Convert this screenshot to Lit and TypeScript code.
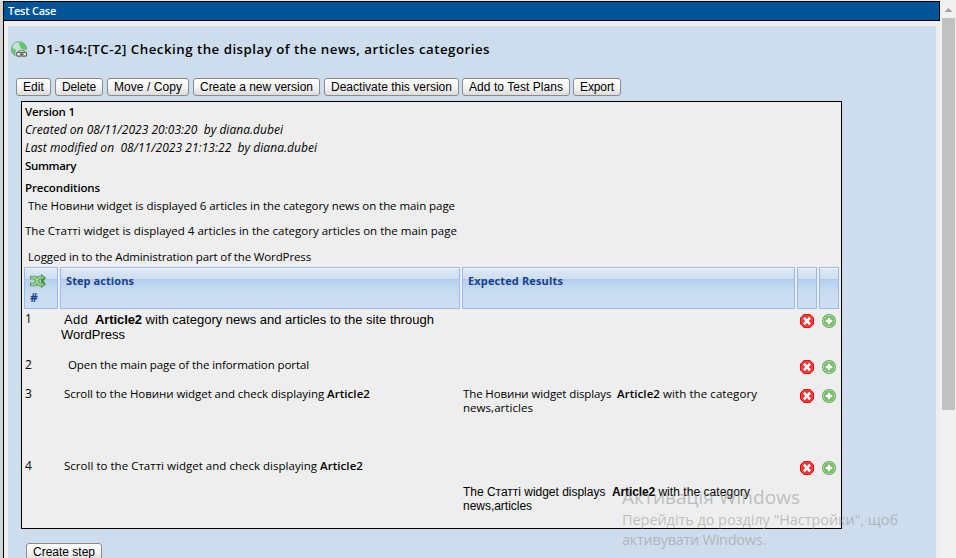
import { LitElement, html, css } from "lit";

/** A run of text whose tracking is adjusted so that it fills `width` pixels. */
class TextRun extends LitElement {
  static properties = { text: {}, width: { type: Number }, tracking: { state: true } };
  declare text: string;
  declare width: number;
  declare tracking: number;
  static styles = css`
    :host { display: inline-block; white-space: pre; }
  `;
  constructor() {
    super();
    this.text = "";
    this.width = 0;
    this.tracking = 0;
  }
  firstUpdated() {
    const span = this.renderRoot.querySelector("span")!;
    this.tracking = (this.width - span.getBoundingClientRect().width) / this.text.length;
  }
  render() {
    return html`<span style="letter-spacing:${this.tracking}px">${this.text}</span>`;
  }
}
customElements.define("text-run", TextRun);

const run = (text: string, width: number, cls = "") =>
  html`<text-run class=${cls} .text=${text} .width=${width}></text-run>`;

const deleteIcon = html`<svg class="icon" width="14" height="14" viewBox="0 0 14 14">
  <path d="M4 0H10L14 4V10L10 14H4L0 10V4Z" fill="#f00808" />
  <path d="M4.400 1.500H9.600L12.500 4.400V9.600L9.600 12.500H4.400L1.500 9.600V4.400Z" fill="#f83030" stroke="#fb5a5a" stroke-width=".7" />
  <path d="M3.900 3.700L10.100 10.300M10.100 3.700L3.900 10.300" stroke="#fff" stroke-width="2.700" />
</svg>`;

const addIcon = html`<svg class="icon" width="14" height="14" viewBox="0 0 14 14">
  <circle cx="7" cy="7" r="7" fill="#5fa755" />
  <circle cx="7" cy="7" r="5.700" fill="#74bb64" stroke="#b4dcaa" stroke-width=".9" />
  <path d="M7 3.700V10.300M3.700 7H10.300" stroke="#fff" stroke-width="2.300" />
</svg>`;

const linkIcon = html`<svg class="globe" width="17" height="17" viewBox="0 0 17 17">
  <defs>
    <radialGradient id="sea" cx=".35" cy=".3" r=".8">
      <stop offset="0" stop-color="#e3f4ef" />
      <stop offset=".6" stop-color="#92cbc0" />
      <stop offset="1" stop-color="#4f9c87" />
    </radialGradient>
  </defs>
  <circle cx="8" cy="8.200" r="7.600" fill="url(#sea)" stroke="#5aa287" stroke-width=".8" />
  <path d="M7.500 1.500C12 1 14.800 4 15.300 9H12L10 7L8.500 5ZM1 7L4 8L6 10L5 14L3 13L1 10Z" fill="#63c463" />
  <path d="M2 7Q3 2.500 8 1.500L8.500 5L6 8L3 8Z" fill="#bfe6cc" />
  <rect x="4.500" y="8.500" width="12" height="8" rx="2" fill="#cfd6d6" />
  <rect x="5.600" y="11.300" width="5" height="3.800" rx="1.400" fill="#fff" stroke="#59615f" stroke-width="1.200" />
  <rect x="10.600" y="11.300" width="5" height="3.800" rx="1.400" fill="#fff" stroke="#59615f" stroke-width="1.200" />
  <path d="M8.500 13.200H13" stroke="#59615f" stroke-width="1.200" />
  <path d="M7.500 11V9.500H13.500V11" fill="none" stroke="#8c9694" />
</svg>`;

const shuffleIcon = html`<svg class="shuffle" width="16" height="14" viewBox="0 0 16 14">
  <path d="M0 3.500H5L9 10.500H12M0 10.500H5L9 3.500H12" fill="none" stroke="#4c9a48" stroke-width="3.600" />
  <path d="M11 0L16 3.700L13.500 7L16 10.500L11 14Z" fill="#3f8d3c" />
  <path d="M1 3.500H5L9 10.500H12.500M1 10.500H5L9 3.500H12.500" fill="none" stroke="#9bd691" stroke-width="1.900" />
  <path d="M12 1.800L14.500 3.700L12 5.600ZM12 8.600L14.500 10.500L12 12.400Z" fill="#86c97d" />
</svg>`;

const buttons: [string, number][] = [
  ["Edit", 35], ["Delete", 48], ["Move / Copy", 82], ["Create a new version", 127],
  ["Deactivate this version", 135], ["Add to Test Plans", 108], ["Export", 48],
];

const steps = [
  {
    cls: "s1",
    action: html`<div class="arial big">${run("Add", 24, "in4")}${run("Article2", 47, "b gap7")}${run(" with category news and articles to the site through", 292)}</div>
      <div class="arial big">${run("WordPress", 64, "in0")}</div>`,
    result: "",
  },
  { cls: "s2", action: html`<div>${run("Open the main page of the information portal", 241, "in7")}</div>`, result: "" },
  {
    cls: "s3",
    action: html`<div>${run("Scroll to the Новини widget and check displaying ", 263, "in4")}${run("Article2", 43, "b")}</div>`,
    result: html`<div>${run("The Новини widget displays  ", 154)}${run("Article2", 43, "b")}${run(" with the category", 97)}</div>
      <div>${run("news,articles", 70)}</div>`,
  },
  {
    cls: "s4",
    action: html`<div>${run("Scroll to the Статті widget and check displaying ", 256, "in4")}${run("Article2", 43, "b")}</div>`,
    result: html`<div class="arial low">${run("The Статті widget displays  ", 149)}${run("Article2", 43, "b")}${run(" with the category", 95)}</div>
      <div class="arial">${run("news,articles", 69)}</div>`,
  },
];

class AppRoot extends LitElement {
  static styles = css`
    :host {
      display: block; height: 558px; overflow: hidden; position: relative;
      background: #eee; color: #000;
      font: 11.5px/14px "Open Sans", "Noto Sans", sans-serif;
    }
    .page { display: flex; height: 558px; box-sizing: border-box; border-top: 1px solid #e4f1f3; }
    .edge { width: 3px; background: #d4d4d0; border-right: 1px solid #000; flex: none; }
    .main { width: 936px; flex: none; overflow: hidden; }
    .bar {
      box-sizing: border-box; height: 20px; padding-left: 4px;
      border: 1px solid #000; border-left: 0; background: #005498;
      color: #fff; font-size: 11px; font-weight: 600; line-height: 18px;
    }
    .panel { margin: 5px 4px 0; height: 540px; background: #cddded; overflow: hidden; }
    .title { display: flex; align-items: center; height: 20px; margin: 13px 0 0 3px; gap: 8px; font-size: 13.3px; line-height: 20px; font-weight: 600; }
    .globe { margin-top: 1px; }
    .buttons { display: flex; gap: 4px; margin: 19px 0 0 8px; }
    .btn {
      box-sizing: border-box; height: 18px; padding: 0; border: 1px solid #8b8b8b; border-radius: 3px;
      background: linear-gradient(#fff, #f5f5f5 50%, #dcdcdc); color: #000;
      font: 12px/16px "Liberation Sans", Arial, sans-serif; text-align: center; flex: none;
    }
    .btn.tight { margin-left: -1px; }
    .card { box-sizing: border-box; width: 821px; height: 428px; margin: 5px 0 0 13px; padding: 1px 2px 0; border: 1px solid #000; background: #eee; }
    .line { height: 18px; line-height: 17px; padding-left: 1px; }
    .b { font-weight: 600; }
    .i { font-style: italic; font-size: 12px; line-height: 18px; }
    .pre { margin-top: 4px; }
    .second { margin-top: 7px; }
    .third { margin-top: 8px; margin-bottom: 1px; }
    .indent { padding-left: 4px; }
    .row { display: grid; grid-template-columns: 34px 400px 333px 20px 20px; column-gap: 2px; }
    .head { height: 42px; margin-bottom: 1px; }
    .th {
      box-sizing: border-box; border: 1px solid #99bbe8; padding: 4px 5px; height: 42px;
      box-shadow: inset 0 1px #f3f8fd;
      background: linear-gradient(#dce8f5 0, #cfdff1 11px, #abc7ec 11px, #b9d0ef 13px, #c9dbf2 24px, #cdddf3 100%);
      color: #15428b; font-weight: 700; font-size: 11px; line-height: 17px;
    }
    .shuffle { display: block; margin-top: 2px; }
    .hash { line-height: 17px; margin-top: 1px; font-size: 12px; }
    .num { padding: 2px 0 0 1px; font-size: 12px; }
    .act { padding-top: 2px; }
    .res { padding: 2px 0 0 1px; }
    .act, .res { white-space: nowrap; }
    .arial { font-family: "Liberation Sans", Arial, sans-serif; font-size: 12px; }
    .arial .b { font-weight: 700; }
    .arial.big { font-size: 13px; line-height: 15px; }
    .low { margin-top: 26px; }
    .in0 { margin-left: 1px; }
    .in4 { margin-left: 4px; }
    .in7 { margin-left: 8px; }
    .gap7 { margin-left: 7px; }
    .icon { display: block; margin: 4px 0 0 3px; }
    .s1 { height: 46px; }
    .s2 { height: 29px; }
    .s3 { height: 72px; }
    .s4 { height: 70px; }
    .after { margin: 14px 0 0 18px; }
    .scroll { flex: 1; background: #f1f1f1; display: flex; flex-direction: column; }
    .arrow { display: block; margin: 7px 0 6px 5px; }
    .thumb { width: 13px; height: 392px; margin-left: 2px; background: #c1c1c1; }
    .mark { position: absolute; left: 622px; top: 485px; color: rgba(140, 140, 140, .5); font-size: 14.5px; line-height: 20px; white-space: nowrap; }
    .mark .big-line { font-size: 19px; line-height: 25px; }
  `;

  button(label: string, width: number, cls = "") {
    return html`<button class="btn ${cls}" style="width:${width}px">${run(label, width - 14)}</button>`;
  }

  render() {
    return html`
      <div class="page">
        <div class="edge"></div>
        <div class="main">
          <div class="bar">${run("Test Case", 48)}</div>
          <div class="panel">
            <div class="title">${linkIcon}${run("D1-164:[TC-2] Checking the display of the news, articles categories", 454)}</div>
            <div class="buttons">${buttons.map(([l, w], i) => this.button(l, w, i > 4 ? "tight" : ""))}</div>
            <div class="card">
              <div class="line b">${run("Version 1", 50)}</div>
              <div class="line i">${run("Created on 08/11/2023 20:03:20  by diana.dubei", 258)}</div>
              <div class="line i">${run("Last modified on  08/11/2023 21:13:22  by diana.dubei", 292)}</div>
              <div class="line b">${run("Summary", 51)}</div>
              <div class="line b pre">${run("Preconditions", 75)}</div>
              <div class="line indent">${run("The Новини widget is displayed 6 articles in the category news on the main page", 427)}</div>
              <div class="line second">${run("The Статті widget is displayed 4 articles in the category articles on the main page", 432)}</div>
              <div class="line indent third">${run("Logged in to the Administration part of the WordPress", 283)}</div>
              <div class="row head">
                <div class="th">${shuffleIcon}<div class="hash">#</div></div>
                <div class="th">${run("Step actions", 68)}</div>
                <div class="th">${run("Expected Results", 95)}</div>
                <div class="th"></div>
                <div class="th"></div>
              </div>
              ${steps.map((s, i) => html`
                <div class="row ${s.cls}">
                  <div class="num">${i + 1}</div>
                  <div class="act">${s.action}</div>
                  <div class="res">${s.result}</div>
                  ${deleteIcon}${addIcon}
                </div>`)}
            </div>
            <div class="after">${this.button("Create step", 76)}</div>
          </div>
        </div>
        <div class="scroll">
          <svg class="arrow" width="7" height="4" viewBox="0 0 7 4" shape-rendering="crispEdges"><path d="M3 0H4V1H5V2H6V3H7V4H0V3H1V2H2V1H3Z" fill="#a3a3a3" /></svg>
          <div class="thumb"></div>
        </div>
      </div>
      <div class="mark">
        <div class="big-line">${run("Активація Windows", 178)}</div>
        <div>${run('Перейдіть до розділу "Настройки", щоб', 276)}</div>
        <div>${run("активувати Windows.", 144)}</div>
      </div>`;
  }
}
customElements.define("app-root", AppRoot);
